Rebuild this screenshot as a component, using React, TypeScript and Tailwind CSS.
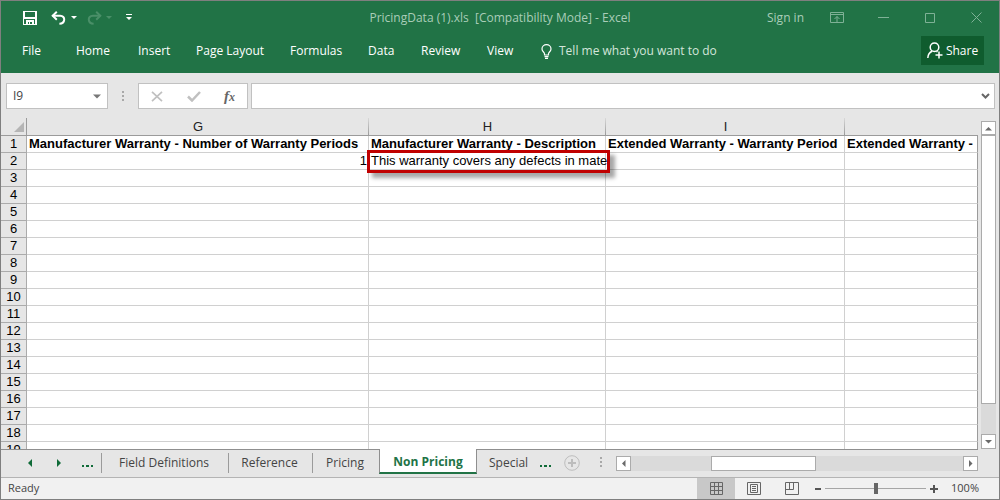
import React from "react";

const columns = ["G", "H", "I", ""];

const headings = [
  "Manufacturer Warranty - Number of Warranty Periods",
  "Manufacturer Warranty - Description",
  "Extended Warranty - Warranty Period",
  "Extended Warranty -",
];

const rowNumbers = Array.from({ length: 19 }, (_, i) => i + 1);

function SaveIcon() {
  return (
    <svg width="14" height="14" viewBox="0 0 14 14" fill="#fff" fillRule="evenodd" shapeRendering="crispEdges">
      <path d="M0 0h14v14H0zM2 1v5h10V1zM1 8v5h2V9h8v4h1V8zM5 11v2h1v-2zM7 11v2h2v-2z" />
    </svg>
  );
}

function CurvedArrow({ flipped = false }: { flipped?: boolean }) {
  return (
    <svg width="15" height="14" viewBox="0 0 15 14" fill="none" stroke="currentColor" strokeWidth="2">
      <g transform={flipped ? "matrix(-1 0 0 1 15 0)" : undefined}>
        <path d="M1.500 4.800H9.200c5.600 0 5.400 7.700-.8 8" />
        <path d="M5.800.8 1.700 4.800l4.100 3.900" />
      </g>
    </svg>
  );
}

function Caret() {
  return (
    <svg width="6" height="3" viewBox="0 0 6 3" fill="currentColor">
      <path d="M0 0h6L3 3z" />
    </svg>
  );
}

function Dots({ label }: { label: string }) {
  return (
    <svg width="3" height="11" viewBox="0 0 3 11" fill="#a8a8a8" role="img" aria-label={label}>
      <path d="M0 0h2v2H0zM0 4h2v2H0zM0 8h2v2H0z" />
    </svg>
  );
}

function Arrow({ d }: { d: string }) {
  return (
    <svg width="9" height="9" viewBox="0 0 9 9" fill="#6a6a6a">
      <path d={d} />
    </svg>
  );
}

function TitleBar() {
  return (
    <header className="grid h-[33px] grid-cols-[1fr_auto_1fr] items-center bg-[#217346] text-xs text-[#a9cdb8]">
      <div className="flex items-center pl-[22px] text-white">
        <button aria-label="Save"><SaveIcon /></button>
        <button aria-label="Undo" className="ml-[14px]"><CurvedArrow /></button>
        <button aria-label="Undo history" className="ml-[5px]"><Caret /></button>
        <button aria-label="Redo" className="ml-[10px] text-[#4a8f68]"><CurvedArrow flipped /></button>
        <button aria-label="Redo history" className="ml-1 text-[#4a8f68]"><Caret /></button>
        <button aria-label="Customize toolbar" className="ml-[14px]">
          <svg width="6" height="7" viewBox="0 0 6 7" fill="currentColor">
            <path d="M0 0h6v1H0zM0 3h6L3 6z" />
          </svg>
        </button>
      </div>
      <h1 className="whitespace-pre">PricingData (1).xls  [Compatibility Mode] - Excel</h1>
      <div className="flex items-center justify-end pr-[17px] text-[#7fb196]">
        <a href="#signin" className="mr-[26px] text-[#a9cdb8]">Sign in</a>
        <button aria-label="Ribbon display options" className="mr-[34px]">
          <svg width="14" height="11" viewBox="0 0 14 11" fill="none" stroke="currentColor">
            <path d="M.5.5h13v10H.5zM.5 2.500h13M7 10V4.500M4.500 7 7 4.500 9.500 7" />
          </svg>
        </button>
        <button aria-label="Minimize" className="mr-9">
          <svg width="11" height="11" viewBox="0 0 11 11" stroke="currentColor"><path d="M0 5.500h11" /></svg>
        </button>
        <button aria-label="Maximize" className="mr-9">
          <svg width="10" height="10" viewBox="0 0 10 10" fill="none" stroke="currentColor"><path d="M.5.5h9v9h-9z" /></svg>
        </button>
        <button aria-label="Close">
          <svg width="11" height="11" viewBox="0 0 11 11" stroke="currentColor"><path d="m.5.5 10 10M10.500.5l-10 10" /></svg>
        </button>
      </div>
    </header>
  );
}

function Ribbon() {
  return (
    <nav className="flex h-[39px] items-start justify-between bg-[#217346] pt-0.5 pr-[15px] pl-[21px] text-xs text-white">
      <div className="grid h-[30px] grid-cols-[54px_62px_58px_94px_78px_53px_66px_53px_auto] items-center text-left whitespace-nowrap">
        <button className="text-left">File</button>
        <button className="text-left">Home</button>
        <button className="text-left">Insert</button>
        <button className="text-left">Page Layout</button>
        <button className="text-left">Formulas</button>
        <button className="text-left">Data</button>
        <button className="text-left">Review</button>
        <button className="text-left">View</button>
        <button className="flex items-center gap-[7px] pl-px text-[#d3e5da]">
          <svg width="11" height="15" viewBox="0 0 11 15" fill="none" stroke="#fff" strokeWidth="1.2">
            <path d="M3.500 11V9.800C3.500 8.300 1 7.400 1 4.900a4.500 4.300 0 0 1 9 0c0 2.500-2.500 3.400-2.500 4.900V11z" />
            <path d="M3.500 12.600h4M4 14.300h3" />
          </svg>
          Tell me what you want to do
        </button>
      </div>
      <button className="flex h-[29px] w-[63px] items-center justify-center gap-[3px] bg-[#0f5c2e]">
        <svg width="16" height="17" viewBox="0 0 16 17" fill="none" stroke="#fff" strokeWidth="1.5">
          <circle cx="7.500" cy="5.300" r="4.300" />
          <path d="M.8 16c.2-3.600 2-5.800 4.400-6.700M9.500 9.300l1 .7M12 9.500v7M8.500 13h7" />
        </svg>
        Share
      </button>
    </nav>
  );
}

function FormulaBar() {
  return (
    <div className="flex h-[45px] items-start pt-[10px] pr-1 pl-[5px] text-[#444]">
      <div className="flex h-[26px] w-[102px] items-center border border-[#c1c1c1] bg-white pr-[6px] pl-[6px]">
        <input aria-label="Name box" defaultValue="I9" className="min-w-0 flex-1 bg-transparent text-xs outline-none" />
        <button aria-label="Open name list">
          <svg width="8" height="5" viewBox="0 0 8 5" fill="#777"><path d="M0 .5h8L4 4.500z" /></svg>
        </button>
      </div>
      <div className="flex h-[26px] w-[30px] items-center justify-center"><Dots label="Resize name box" /></div>
      <div className="flex h-[26px] w-[110px] items-center justify-between border border-[#c1c1c1] bg-white pr-3 pl-3">
        <button aria-label="Cancel">
          <svg width="12" height="11" viewBox="0 0 12 11" stroke="#c0c0c0" strokeWidth="1.700"><path d="m1 .8 10 9.400M11 .8 1 10.200" /></svg>
        </button>
        <button aria-label="Enter">
          <svg width="14" height="11" viewBox="0 0 14 11" fill="none" stroke="#c0c0c0" strokeWidth="2.500"><path d="m1 5.500 4 4L13 1" /></svg>
        </button>
        <button aria-label="Insert function" className="font-['Liberation_Serif',serif] text-[15px] leading-4 font-bold text-[#666] italic">
          f<span className="text-[12px]">x</span>
        </button>
      </div>
      <div className="ml-[3px] flex h-[26px] flex-1 items-center border border-[#c1c1c1] bg-white pr-1 pl-2">
        <input aria-label="Formula" className="min-w-0 flex-1 bg-transparent text-xs outline-none" />
        <button aria-label="Expand formula bar">
          <svg width="9" height="6" viewBox="0 0 9 6" fill="none" stroke="#666" strokeWidth="2"><path d="m1 1 3.500 3.500L8 1" /></svg>
        </button>
      </div>
    </div>
  );
}

function Sheet() {
  return (
    <div className="min-w-0 flex-1 overflow-hidden font-['Liberation_Sans',Arial,sans-serif] text-[13px] leading-4 text-black">
      <table className="w-full table-fixed border-separate border-spacing-0">
        <colgroup>
          <col className="w-[26px]" />
          <col className="w-[342px]" />
          <col className="w-[237px]" />
          <col className="w-[239px]" />
          <col />
        </colgroup>
        <thead>
          <tr>
            <th aria-label="Select all" className="h-[18px] border-r border-b border-[#9b9b9b] p-0">
              <svg className="mt-px ml-[13px]" width="10" height="10" viewBox="0 0 10 10" fill="#b5b5b5"><path d="M10 0v10H0z" /></svg>
            </th>
            {columns.map((name, i) => (
              <th
                key={i}
                className={
                  "h-[18px] border-b border-[#9b9b9b] p-0 font-normal text-[#222] " +
                  (i < 3 ? "bg-[linear-gradient(to_bottom,#d8d8d8,#9b9b9b)] bg-[length:1px_100%] bg-right bg-no-repeat" : "")
                }
              >
                {name}
              </th>
            ))}
          </tr>
        </thead>
        <tbody>
          {rowNumbers.map((n) => (
            <tr key={n}>
              <th className="h-[17px] border-r border-b border-[#ababab] p-0 font-normal">{n}</th>
              {columns.map((_, i) => (
                <td
                  key={i}
                  className={
                    "relative h-[17px] border-r border-b bg-white py-0 pr-0 pl-0.5 whitespace-nowrap border-b-[#d0d0d0] " +
                    (i === 3 ? "border-r-[#9b9b9b]" : "border-r-[#d0d0d0]")
                  }
                >
                  {n === 1 && <div className="font-bold">{headings[i]}</div>}
                  {n === 2 && i === 0 && <div className="pr-px text-right">1</div>}
                  {n === 2 && i === 1 && (
                    <div className="absolute -top-[3px] -left-[2px] z-10 h-[23px] w-[243px] border-3 border-[#c00000] pl-px shadow-[5px_5px_4px_rgba(0,0,0,0.35)]">
                      This warranty covers any defects in mate
                    </div>
                  )}
                </td>
              ))}
            </tr>
          ))}
        </tbody>
      </table>
    </div>
  );
}

function VerticalScroll() {
  return (
    <div className="flex w-[21px] flex-col pt-[3px] pr-[3px] pl-[3px]">
      <button aria-label="Scroll up" className="flex h-[14px] items-center justify-center border border-[#ababab] bg-white">
        <Arrow d="M1 6.500h7L4.500 3z" />
      </button>
      <div className="flex flex-1 flex-col bg-[#dadada]">
        <div className="h-[90%] border border-[#ababab] bg-white" />
      </div>
      <button aria-label="Scroll down" className="flex h-[15px] items-center justify-center border border-[#ababab] bg-white">
        <Arrow d="M1 3h7L4.500 6.500z" />
      </button>
    </div>
  );
}

function SheetTabs() {
  return (
    <div className="flex h-7 text-[12px] text-[#444]">
      <div className="flex flex-1 items-start">
        <div className="flex h-[26px] w-[100px] items-center border-t border-[#8f8f8f] text-[#0f6b38]">
          <button aria-label="Previous sheet" className="ml-[27px]">
            <svg width="4" height="8" viewBox="0 0 4 8" fill="currentColor"><path d="M4 0v8L0 4z" /></svg>
          </button>
          <button aria-label="Next sheet" className="ml-[25px]">
            <svg width="4" height="8" viewBox="0 0 4 8" fill="currentColor"><path d="M0 0v8l4-4z" /></svg>
          </button>
          <button aria-label="More sheets to the left" className="ml-[21px] pt-[7px]">
            <svg width="11" height="2" viewBox="0 0 11 2" fill="currentColor"><path d="M0 0h2v2H0zM4 0h3v2H4zM9 0h2v2H9z" /></svg>
          </button>
        </div>
        <div className="flex h-[26px] items-center border-t border-[#8f8f8f]">
          <button className="h-5 w-[127px] border-l border-[#9b9b9b] pr-0.5">Field Definitions</button>
          <button className="h-5 w-[84px] border-l border-[#9b9b9b] pr-0.5">Reference</button>
          <button className="h-5 w-[67px] border-l border-[#9b9b9b] pr-0.5">Pricing</button>
        </div>
        <button className="h-[25px] w-[98px] border-r border-b-2 border-l border-[#8f8f8f] border-b-[#217346] bg-white pt-[3px] font-bold text-[#217346]">Non Pricing</button>
        <div className="flex h-[26px] flex-1 items-center border-t border-[#8f8f8f]">
          <button className="ml-3 w-[42px] text-left">Special</button>
          <button aria-label="More sheets to the right" className="ml-[9px] pt-[7px] text-[#0f6b38]">
            <svg width="11" height="2" viewBox="0 0 11 2" fill="currentColor"><path d="M0 0h2v2H0zM4 0h3v2H4zM9 0h2v2H9z" /></svg>
          </button>
          <button aria-label="New sheet" className="ml-[13px]">
            <svg width="16" height="16" viewBox="0 0 16 16" fill="none" stroke="#bdbdbd">
              <circle cx="8" cy="8" r="7.300" />
              <path d="M8 4v8M4 8h8" strokeWidth="2" />
            </svg>
          </button>
          <div className="ml-5"><Dots label="Resize tabs" /></div>
          <div className="ml-[13px] mt-0.5 flex h-[15px] flex-1 bg-[#dadada]">
            <button aria-label="Scroll left" className="flex w-[15px] items-center justify-center border border-[#ababab] bg-white">
              <Arrow d="M6.500 1v7L3 4.500z" />
            </button>
            <div className="flex flex-1 pl-20">
              <div className="w-[105px] border border-[#ababab] bg-white" />
            </div>
            <button aria-label="Scroll right" className="flex w-[15px] items-center justify-center border border-[#ababab] bg-white">
              <Arrow d="M3 1v7l3.500-3.500z" />
            </button>
          </div>
        </div>
      </div>
      <div className="w-[21px]" />
    </div>
  );
}

function StatusBar() {
  return (
    <footer className="flex h-[22px] items-center border-t border-[#b4b4b4] bg-[#f1f1f1] pr-5 pl-[7px] text-[11px] text-[#444]">
      <span className="flex-1">Ready</span>
      <button aria-label="Normal view" className="flex h-full w-[38px] items-center justify-center bg-[#c8c8c8]">
        <svg width="13" height="13" viewBox="0 0 13 13" fill="none" stroke="#666"><path d="M.5.5h12v12H.5zM.5 4.500h12M.5 8.500h12M4.500.5v12M8.500.5v12" /></svg>
      </button>
      <button aria-label="Page layout view" className="flex h-full w-[38px] items-center justify-center">
        <svg width="14" height="13" viewBox="0 0 14 13" fill="none" stroke="#666"><path d="M.5.5h13v12H.5zM3.500 2.500h7v8h-7zM5 4.500h4M5 6.500h4M5 8.500h4" /></svg>
      </button>
      <button aria-label="Page break view" className="flex h-full w-[38px] items-center justify-center">
        <svg width="14" height="13" viewBox="0 0 14 13" fill="none" stroke="#666"><path d="M.5.5h13v12H.5zM.5 7.500h8V.5M4.500.5v7" /></svg>
      </button>
      <button aria-label="Zoom out" className="ml-1">
        <svg width="7" height="8" viewBox="0 0 7 8" fill="#555"><path d="M0 3h6v2H0z" /></svg>
      </button>
      <input
        type="range"
        aria-label="Zoom"
        defaultValue={50}
        className="mr-1 ml-[3px] h-3 w-[101px] appearance-none bg-[linear-gradient(#a6a6a6,#a6a6a6)] bg-[length:100%_1px] bg-center bg-no-repeat [&::-webkit-slider-thumb]:h-[11px] [&::-webkit-slider-thumb]:w-1 [&::-webkit-slider-thumb]:appearance-none [&::-webkit-slider-thumb]:bg-[#666]"
      />
      <button aria-label="Zoom in">
        <svg width="8" height="8" viewBox="0 0 8 8" fill="#555"><path d="M0 3h8v2H0zM3 0h2v8H3z" /></svg>
      </button>
      <span className="w-[41px] text-right">100%</span>
    </footer>
  );
}

export default function App() {
  return (
    <div className="flex h-screen flex-col border border-[#7f7f7f] bg-[#e6e6e6] font-['Open_Sans','Noto_Sans',sans-serif]">
      <TitleBar />
      <Ribbon />
      <FormulaBar />
      <main className="flex min-h-0 flex-1">
        <Sheet />
        <VerticalScroll />
      </main>
      <SheetTabs />
      <StatusBar />
    </div>
  );
}
